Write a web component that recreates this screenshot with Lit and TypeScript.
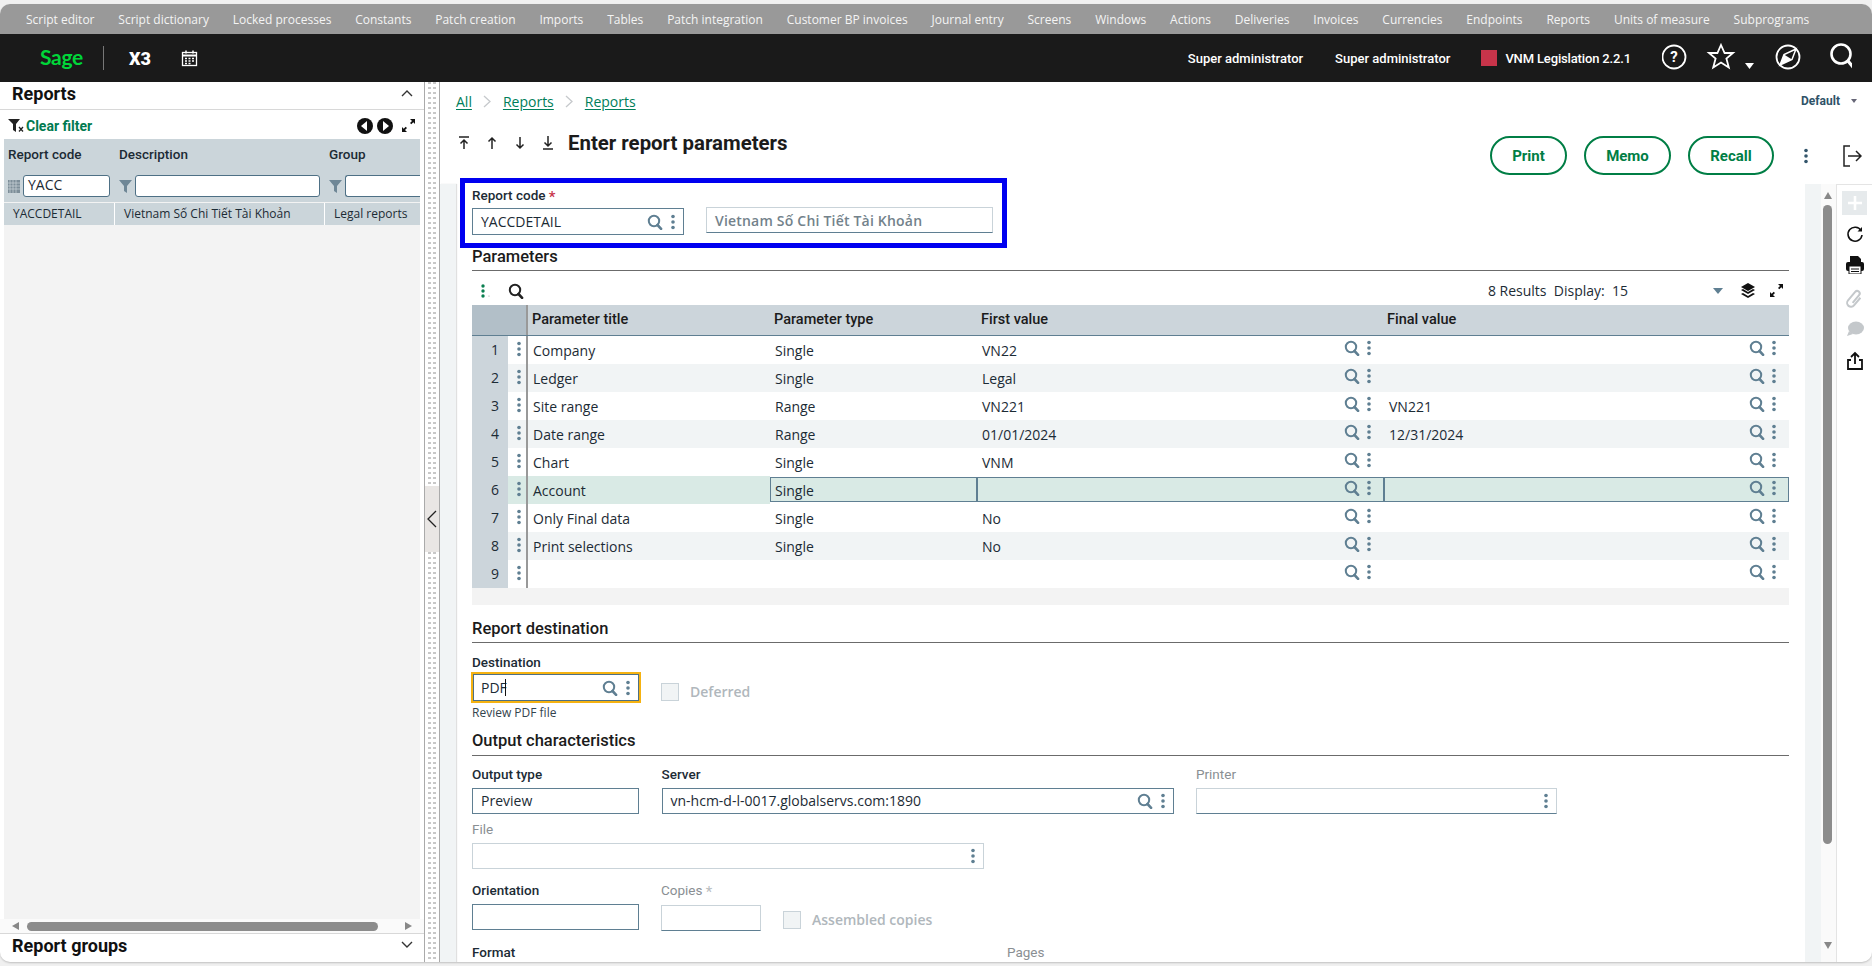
import { LitElement, html, css, svg } from "lit";
import { customElement } from "lit/decorators.js";

const search = (s = 16, c = "#5f7f92") => html`<svg class="ico" width=${s} height=${s} viewBox="0 0 16 16" fill="none" stroke=${c}><circle cx="7" cy="7" r="5.2" stroke-width="2"/><path d="M10.5 11l3.6 3.8" stroke-width="2.6" stroke-linecap="round"/></svg>`;
const dots = (c = "#5f7f92") => html`<svg class="ico" width="4" height="16" viewBox="0 0 4 16" fill=${c}><circle cx="2" cy="2.5" r="1.8"/><circle cx="2" cy="8" r="1.8"/><circle cx="2" cy="13.5" r="1.8"/></svg>`;
const funnel = (c = "#6f8796") => html`<svg class="ico" width="13" height="14" viewBox="0 0 13 14" fill=${c}><path d="M0 1h13L8 7v7L5 12V7z"/></svg>`;
const expand = () => html`<svg class="ico" width="15" height="15" viewBox="0 0 15 15" fill="#111"><path d="M9 1h5v5l-1.700-1.700-2 2-1.300-1.300 2-2zM6 14H1V9l1.700 1.700 2-2 1.300 1.300-2 2z"/></svg>`;
const crumbSep = () => html`<i><svg class="ico" width="8" height="13" viewBox="0 0 8 13" fill="none" stroke="#c6c9cc" stroke-width="1.300"><path d="M1 1l6 5.500L1 12"/></svg></i>`;
const arrow = (dir: string) => {
  const body = {
    first: svg`<path d="M3 2h10M8 14V5M4.500 8.500L8 5l3.500 3.500"/>`,
    up: svg`<path d="M8 14V3M4.500 6.500L8 3l3.500 3.500"/>`,
    down: svg`<path d="M8 2v11M4.500 9.500L8 13l3.500-3.500"/>`,
    last: svg`<path d="M8 1v10M4.500 7.500L8 11l3.500-3.500M3 14h10"/>`,
  }[dir];
  return html`<svg class="ico" width="16" height="16" viewBox="0 0 16 16" fill="none" stroke="#222" stroke-width="1.500">${body}</svg>`;
};

const NAV = ["Script editor","Script dictionary","Locked processes","Constants","Patch creation","Imports","Tables","Patch integration","Customer BP invoices","Journal entry","Screens","Windows","Actions","Deliveries","Invoices","Currencies","Endpoints","Reports","Units of measure","Subprograms"];

const ROWS: [string,string,string,string][] = [
  ["Company","Single","VN22",""],
  ["Ledger","Single","Legal",""],
  ["Site range","Range","VN221","VN221"],
  ["Date range","Range","01/01/2024","12/31/2024"],
  ["Chart","Single","VNM",""],
  ["Account","Single","",""],
  ["Only Final data","Single","No",""],
  ["Print selections","Single","No",""],
  ["","","",""],
];

@customElement("app-root")
export class AppRoot extends LitElement {
  static styles = css`
    :host { display:block; width:1872px; height:966px; background:#f0f0f0; padding-top:4px; box-sizing:border-box; overflow:hidden;
      font-family:"Open Sans","Liberation Sans",sans-serif; font-size:14px; color:#1c2b35; }
    * { box-sizing:border-box; }
    .ico { display:block; flex:none; }
    .app { height:958px; background:#fff; border-radius:10px; overflow:hidden; display:flex; flex-direction:column; box-shadow:0 1px 2px rgba(0,0,0,.2); }

    .nav { height:30px; flex:none; background:#999; color:#f4f4f4; display:flex; align-items:center; padding-left:26px; gap:23.850px; font-size:12px; white-space:nowrap; }
    .top { height:48px; flex:none; background:#1a1a1a; color:#fff; display:flex; align-items:center; }
    .logo { width:104px; padding-left:40px; color:#00d639; font-family:Lato,sans-serif; font-weight:700; font-size:21px; letter-spacing:-.3px; border-right:1px solid #777; height:24px; line-height:22px; flex:none; }
    .x3 { font-family:Roboto,sans-serif; font-weight:900; font-size:18px; margin-left:25px; width:52px; flex:none; }
    .spacer { flex:1; }
    .user { font-family:Roboto,sans-serif; font-weight:500; font-size:13px; }
    .u1 { margin-right:32px; }
    .u2 { margin-right:31px; }
    .sq { width:16px; height:16px; background:#c8344a; margin-right:8px; }
    .leg { margin-right:31px; letter-spacing:-.15px; }
    .topicons { display:flex; align-items:center; padding-right:20px; }

    .body { flex:1; display:flex; min-height:0; }
    .left { width:424px; flex:none; display:flex; flex-direction:column; }
    .ptitle { font-family:Roboto,sans-serif; font-weight:700; font-size:18px; display:flex; justify-content:space-between; align-items:center; padding:0 10px 0 12px; color:#111; }
    .ptitle.t { height:28px; border-bottom:1px solid #d8d8d8; padding-bottom:5px; }
    .ptitle.b { height:29px; border-top:1px solid #d8d8d8; padding-bottom:6px; }
    .clear { height:29px; display:flex; align-items:center; padding:2px 8px 0 8px; }
    .clear b { font-family:Roboto,sans-serif; font-size:14px; font-weight:700; color:#007a50; flex:1; }
    .circ { display:flex; gap:4px; margin-right:8px; }
    .ltable { flex:1; margin:0 4px; background:#f3f3f3; overflow:hidden; font-size:12px; }
    .lrow { display:grid; grid-template-columns:111px 210px 95px; background:#cbd5da; }
    .lh { height:30px; font-family:Roboto,sans-serif; font-weight:500; font-size:13.500px; align-items:center; }
    .lh span { padding-left:4px; }
    .lf { height:33px; align-items:start; padding-top:6px; }
    .lf div { display:flex; align-items:center; gap:3px; padding-left:4px; }
    .lf .inp { height:22px; background:#fff; border:1px solid #4e7085; border-radius:3px; padding-left:4px; font-size:14px; flex:1; min-width:0; line-height:18px; }
    .lf div:first-child .inp { margin-right:5px; }
    .lf div:nth-child(2) .inp { margin-right:5px; }
    .lf div:last-child .inp { border-right:0; border-radius:3px 0 0 3px; }
    .ld { height:23px; border-top:1px solid #f3f3f3; align-items:center; line-height:22px; }
    .ld span { padding-left:9px; height:100%; border-right:1px solid #fff; white-space:nowrap; }
    .ld span:last-child { border:0; }
    .hbar { height:14px; background:#fafafa; flex:none; display:flex; align-items:center; padding:0 12px; gap:8px; }
    .thumb { width:351px; height:9px; background:#8c8c8c; border-radius:5px; }
    .tl { width:0; height:0; border:4.500px solid transparent; border-left:0; border-right:7px solid #888; }
    .tr { width:0; height:0; border:4.500px solid transparent; border-right:0; border-left:7px solid #888; margin-left:19px; }

    .split { width:16px; flex:none; border-left:1px solid #aaa; border-right:1px solid #aaa; position:relative; display:flex; justify-content:center; gap:2px; }
    .dotc { width:3px; height:100%; background:repeating-linear-gradient(to bottom,#c8c8c8 0 2.500px,transparent 2.500px 5px); }
    .handle { position:absolute; left:0; right:0; top:404px; height:66px; background:#e9e6e4; display:flex; align-items:center; justify-content:center; }

    .main { flex:1; min-width:0; display:flex; flex-direction:column; }
    .head { height:102px; flex:none; padding:0 10px 0 16px; display:grid; grid-template-columns:1fr auto; grid-template-rows:39px 1fr; }
    .crumb { display:flex; align-items:center; font-size:14px; padding-bottom:1px; }
    .crumb a { color:#007e5a; text-decoration:underline; text-underline-offset:2px; }
    .crumb i { width:31px; display:flex; justify-content:center; }
    .def { justify-self:end; display:flex; align-items:center; gap:11px; font-family:Roboto,sans-serif; font-weight:700; font-size:12px; color:#2f5268; padding:0 5px 2px 0; }
    .def::after { content:""; border:3px solid transparent; border-top:4px solid #667; border-bottom:0; }
    .titleline { display:flex; align-items:flex-start; padding-top:12px; }
    .titleline .ico { margin-right:12px; margin-top:2px; }
    .titleline h1 { margin:-2px 0 0 0; font-family:Roboto,sans-serif; font-weight:700; font-size:20.400px; color:#1b1b1b; }
    .acts { display:flex; align-items:center; padding-top:15px; height:54px; }
    .btn { height:39px; border:2px solid #007e45; border-radius:20px; display:flex; align-items:center; justify-content:center; font-family:Roboto,sans-serif; font-weight:700; font-size:15px; color:#007e45; margin-right:17px; }
    .acts .d { margin:0 34px 0 30px; }

    .wrap { flex:1; min-height:0; display:flex; }
    .strip { width:16px; flex:none; background:#f1f4f5; }
    .strip.l { box-shadow:1px 0 1px rgba(0,0,0,.12); }
    .form { flex:1; min-width:0; padding:0 16px; }
    .vbar { width:15px; flex:none; background:#fafafa; display:flex; flex-direction:column; align-items:center; padding:8px 2px 6px 0; }
    .vbar .thumbv { width:9px; height:639px; margin:6px 0 98px; background:#8c8c8c; border-radius:5px; flex:none; }
    .vu { width:0; height:0; border:4.500px solid transparent; border-top:0; border-bottom:7px solid #888; flex:none; }
    .vd { width:0; height:0; border:4.500px solid transparent; border-bottom:0; border-top:7px solid #888; flex:none; }
    .tools { width:36px; flex:none; border-top:1px solid #e4e4e4; border-left:1px solid #e4e4e4; display:flex; flex-direction:column; align-items:center; padding-top:6px; }
    .plus { width:25px; height:24px; background:#e6eaec; display:flex; align-items:center; justify-content:center; margin-bottom:10px; }
    .tools > svg { margin-bottom:13px; }

    .blue { margin:-6px 0 0 -12px; width:547px; height:70px; border:5px solid #0000f0; padding:4px 7px 0; position:relative; background:#fff; }
    .lbl { font-family:Roboto,sans-serif; font-weight:500; font-size:13.500px; line-height:16px; margin-bottom:6px; color:#1c2b35; white-space:nowrap; }
    .lbl.g { color:#8a8f93; font-weight:400; }
    .lbl.tight { margin-bottom:2px; }
    .star { color:#c8344a; font-size:15px; line-height:14px; vertical-align:-2px; }
    .lbl.g .star { color:#b9bdc0; }
    .bf { display:flex; gap:22px; }
    .bf .lbl { margin-bottom:4px; }
    .inp2 { height:26px; border:1px solid #5f7f92; display:flex; align-items:center; padding:0 8px; gap:8px; font-size:14px; }
    .inp2 .tx { flex:1; white-space:nowrap; padding-bottom:2px; }
    .blue .inp2 .tx { padding-bottom:0; }
    .inp2.dis { border-color:#c9d3d9; border-bottom-color:#5f7f92; }
    .inp2.dis2 { border-color:#c9d3d9; }
    .dt { font-weight:600; color:#73828b; letter-spacing:.2px; }
    .sec { font-family:Roboto,sans-serif; font-weight:500; font-size:16.500px; line-height:20px; border-bottom:1px solid #6b6b6b; color:#1b1b1b; padding-bottom:4px; }
    .sec.p { height:23px; line-height:18px; }
    .sec.d { margin-top:15px; height:23px; line-height:18px; }
    .sec.o { height:34px; padding-top:10px; line-height:18px; }
    .gbar { height:34px; display:flex; align-items:center; font-size:14px; padding:5px 5px 0 9px; }
    .gbar .sr { margin-left:17px; flex:1; }
    .ghead, .grow { display:grid; grid-template-columns:36px 18px 2px 242px 207px 407px 405px; }
    .ghead { height:31px; background:#ccd5db; border-bottom:1px solid #5f7f92; font-family:Roboto,sans-serif; font-weight:500; font-size:14.500px; align-items:center; color:#1b1b1b; }
    .gcorner { grid-column:1 / 3; background:#b2bfc8; height:30px; }
    .gdiv { background:#999; height:100%; }
    .ghead span { padding:0 0 1px 4px; }
    .ghead .gcorner, .ghead .gdiv { padding:0; }
    .ghead span:last-child { padding-left:3px; }
    .grow { height:28px; }
    .num { background:#ccd5db; display:flex; align-items:center; justify-content:flex-end; padding:0 9px 2px 0; }
    .dc { display:flex; align-items:center; justify-content:center; padding:0 0 3px 4px; }
    .cell { display:flex; align-items:center; padding-left:5px; min-width:0; white-space:nowrap; }
    .cell .tx { flex:1; padding-top:1px; }
    .cell .i { display:flex; align-items:center; gap:7px; padding:0 13px 4px 0; }
    .even .cell { background:#f1f4f5; }
    .even .dc { background:#f1f4f5; }
    .sel .cell, .sel .dc { background:#d9eae5; }
    .sel .box { box-shadow:inset 0 0 0 1px #5f7f92; margin-bottom:2px; margin-top:1px; }
    .gfoot { height:17px; background:#f3f3f3; }
    .pdf { width:170px; height:31px; margin-left:-1px; border:2px solid #f5b211; box-shadow:inset 0 0 0 1px #4e7085; display:flex; align-items:center; gap:8px; padding:0 9px 0 8px; }
    .pdf .tx { flex:1; }
    .pdf u { display:inline-block; width:1px; height:17px; background:#111; vertical-align:-3px; margin-left:-2px; text-decoration:none; }
    .cb { width:18px; height:18px; background:#f1f4f5; border:1px solid #c9d3d9; flex:none; }
    .chk { display:flex; align-items:center; gap:11px; font-weight:600; color:#b0b7bc; }
    .destrow { display:flex; }
    .review { font-size:12px; line-height:19px; color:#33434d; }
    .r1 { display:grid; grid-template-columns:167px 512px 361px; column-gap:22.500px; margin-top:10px; }
    .r2 { margin-top:7px; width:512px; }
    .r3 { display:grid; grid-template-columns:167px 100px 1fr; column-gap:22px; margin-top:13px; }
    .r4 { display:flex; margin-top:13px; width:1000px; }
    .r4 .lbl { margin:0; }
  `;

  render() {
    return html`<div class="app">
      <div class="nav">${NAV.map((n) => html`<span>${n}</span>`)}</div>
      <div class="top">
        <div class="logo">Sage</div>
        <div class="x3">X3</div>
        <svg class="ico" width="17" height="17" viewBox="0 0 17 17" fill="none" stroke="#fff"><rect x="1.500" y="2.500" width="14" height="13" stroke-width="1.300"/><path d="M1.500 5.500h14" stroke-width="2"/><path d="M5 .5v3M12 .5v3" stroke-width="1.500"/><path d="M4 8.500h2M7.500 8.500h2M11 8.500h2M4 11h2M7.500 11h2M11 11h2M4 13.500h2M7.500 13.500h2" stroke-width="1.300"/></svg>
        <div class="spacer"></div>
        <span class="user u1">Super administrator</span>
        <span class="user u2">Super administrator</span>
        <span class="sq"></span>
        <span class="user leg">VNM Legislation 2.2.1</span>
        <div class="topicons">
          <svg class="ico" width="190" height="32" viewBox="0 0 190 32" fill="none" stroke="#fff">
            <circle cx="12" cy="15" r="11.500" stroke-width="1.800"/>
            <text x="12" y="20" text-anchor="middle" fill="#fff" stroke="none" font-family="Roboto" font-weight="700" font-size="15">?</text>
            <path d="M59 3l3.600 8h8.400l-6.600 5.600 2.400 9-7.800-5-7.800 5 2.400-9L47 11h8.400z" stroke-width="1.800" stroke-linejoin="miter"/>
            <path d="M83 21h9l-4.500 6z" fill="#fff" stroke="none"/>
            <circle cx="126" cy="15" r="11.500" stroke-width="1.800"/>
            <path d="M134 7l-12 5.500-4 10.500 12-5.500z" stroke-width="1.500"/>
            <path d="M122 12.500l8 5-12 5.500z" fill="#fff" stroke="none"/>
            <circle cx="179" cy="12" r="9.500" stroke-width="2.600"/>
            <path d="M186 19l5 6" stroke-width="3.200" stroke-linecap="round"/>
          </svg>
        </div>
      </div>
      <div class="body">
        <div class="left">
          <div class="ptitle t"><span>Reports</span><svg class="ico" width="14" height="8" viewBox="0 0 14 8" fill="none" stroke="#333" stroke-width="1.400"><path d="M2 7l5-5 5 5"/></svg></div>
          <div class="clear">
            <svg class="ico" width="18" height="15" viewBox="0 0 18 15"><path d="M0 1h12L8 6v8L5 12V6z" fill="#222"/><path d="M11 9l4 4.500M15 9l-4 4.500" stroke="#222" stroke-width="1.300"/></svg>
            <b>Clear filter</b>
            <div class="circ">
              <svg class="ico" width="16" height="16" viewBox="0 0 16 16"><circle cx="8" cy="8" r="8" fill="#111"/><path d="M10 3v10L4 8z" fill="#fff"/></svg>
              <svg class="ico" width="16" height="16" viewBox="0 0 16 16"><circle cx="8" cy="8" r="8" fill="#111"/><path d="M6 3v10l6-5z" fill="#fff"/></svg>
            </div>
            ${expand()}
          </div>
          <div class="ltable">
            <div class="lrow lh"><span>Report code</span><span>Description</span><span>Group</span></div>
            <div class="lrow lf">
              <div><svg class="ico" width="12" height="13" viewBox="0 0 12 13"><rect width="12" height="13" fill="#7d8e99"/><path d="M2 0v13M5 0v13M8 0v13M0 3h12M0 6h12M0 9h12" stroke="#cbd5da" stroke-width=".7"/></svg><span class="inp">YACC</span></div>
              <div>${funnel()}<span class="inp"></span></div>
              <div>${funnel()}<span class="inp"></span></div>
            </div>
            <div class="lrow ld"><span>YACCDETAIL</span><span>Vietnam Số Chi Tiết Tài Khoản</span><span>Legal reports</span></div>
          </div>
          <div class="hbar"><span class="tl"></span><span class="thumb"></span><span class="tr"></span></div>
          <div class="ptitle b"><span>Report groups</span><svg class="ico" width="14" height="8" viewBox="0 0 14 8" fill="none" stroke="#333" stroke-width="1.400"><path d="M2 1l5 5 5-5"/></svg></div>
        </div>
        <div class="split"><span class="dotc"></span><span class="dotc"></span>
          <div class="handle"><svg class="ico" width="10" height="18" viewBox="0 0 10 18" fill="none" stroke="#222" stroke-width="1.300"><path d="M9 1L1 9l8 8"/></svg></div>
        </div>
        <div class="main">
          <div class="head">
            <div class="crumb"><a>All</a>${crumbSep()}<a>Reports</a>${crumbSep()}<a>Reports</a></div>
            <div class="def">Default</div>
            <div class="titleline">${arrow("first")}${arrow("up")}${arrow("down")}${arrow("last")}<h1>Enter report parameters</h1></div>
            <div class="acts">
              <div class="btn" style="width:77px">Print</div>
              <div class="btn" style="width:87px">Memo</div>
              <div class="btn" style="width:86px;margin-right:0">Recall</div>
              <span class="d">${dots("#34566c")}</span>
              <svg class="ico" width="20" height="22" viewBox="0 0 20 22" fill="none" stroke="#222" stroke-width="1.500"><path d="M8 1H2v20h6M6 11h13M14 6l5 5-5 5"/></svg>
            </div>
          </div>
          <div class="wrap">
            <div class="strip l"></div>
            <div class="form">
              <div class="blue">
                <div class="bf">
                  <div style="width:212px"><div class="lbl">Report code <span class="star">*</span></div>
                    <div class="inp2" style="height:27px"><span class="tx">YACCDETAIL</span>${search()}${dots()}</div></div>
                  <div style="width:287px;padding-top:20px"><div class="inp2 dis"><span class="tx dt">Vietnam Số Chi Tiết Tài Khoản</span></div></div>
                </div>
              </div>
              <div class="sec p">Parameters</div>
              <div class="gbar">
                <svg class="ico" width="10" height="14" viewBox="0 0 10 14" fill="#0a7f50"><circle cx="2" cy="2" r="1.700"/><circle cx="2" cy="7" r="1.700"/><circle cx="2" cy="12" r="1.700"/><circle cx="8" cy="12" r=".6" fill="#999"/></svg>
                <span class="sr">${search(16, "#222")}</span>
                <span style="margin-right:85px;white-space:pre">8 Results  Display:  15</span>
                <svg class="ico" width="10" height="6" viewBox="0 0 10 6" fill="#5f7f92" style="margin-right:17px"><path d="M0 0h10L5 6z"/></svg>
                <svg class="ico" width="16" height="16" viewBox="0 0 16 16" fill="#111" style="margin-right:13px"><path d="M8 0l7 4-7 4-7-4zM1 7l2-1 5 3 5-3 2 1-7 4zM1 11l2-1 5 3 5-3 2 1-7 4z"/></svg>
                ${expand()}
              </div>
              <div class="ghead"><span class="gcorner"></span><span class="gdiv"></span><span>Parameter title</span><span>Parameter type</span><span>First value</span><span>Final value</span></div>
              ${ROWS.map((r, i) => html`<div class="grow ${i % 2 === 1 ? "even" : ""} ${i === 5 ? "sel" : ""}">
                <div class="num">${i + 1}</div><div class="dc">${dots()}</div><div class="gdiv"></div>
                <div class="cell"><span class="tx">${r[0]}</span></div>
                <div class="cell box"><span class="tx">${r[1]}</span></div>
                <div class="cell box"><span class="tx">${r[2]}</span><span class="i">${search()}${dots()}</span></div>
                <div class="cell box"><span class="tx">${r[3]}</span><span class="i">${search()}${dots()}</span></div>
              </div>`)}
              <div class="gfoot"></div>
              <div class="sec d">Report destination</div>
              <div style="padding-top:11px">
                <div class="lbl tight">Destination</div>
                <div class="destrow">
                  <div class="pdf"><span class="tx">PDF<u></u></span>${search()}${dots()}</div>
                  <div class="chk" style="margin-left:20px;padding-top:8px"><span class="cb"></span>Deferred</div>
                </div>
                <div class="review">Review PDF file</div>
              </div>
              <div class="sec o">Output characteristics</div>
              <div class="r1">
                <div><div class="lbl">Output type</div><div class="inp2"><span class="tx">Preview</span></div></div>
                <div><div class="lbl">Server</div><div class="inp2"><span class="tx">vn-hcm-d-l-0017.globalservs.com:1890</span>${search()}${dots()}</div></div>
                <div><div class="lbl g">Printer</div><div class="inp2 dis"><span class="tx"></span>${dots()}</div></div>
              </div>
              <div class="r2"><div class="lbl g">File</div><div class="inp2 dis2"><span class="tx"></span>${dots()}</div></div>
              <div class="r3">
                <div><div class="lbl">Orientation</div><div class="inp2"></div></div>
                <div><div class="lbl g">Copies <span class="star">*</span></div><div class="inp2 dis"></div></div>
                <div class="chk" style="padding-top:26px"><span class="cb"></span>Assembled copies</div>
              </div>
              <div class="r4"><div class="lbl" style="width:535px">Format</div><div class="lbl g">Pages</div></div>
            </div>
            <div class="strip"></div>
            <div class="vbar"><span class="vu"></span><span class="thumbv"></span><span class="vd"></span></div>
            <div class="tools">
              <div class="plus"><svg class="ico" width="16" height="16" viewBox="0 0 16 16" stroke="#fff" stroke-width="2.600"><path d="M8 1v14M1 8h14"/></svg></div>
              <svg class="ico" width="18" height="18" viewBox="0 0 18 18" fill="none" stroke="#111" stroke-width="1.600"><path d="M15 5.500A7 7 0 1 0 16 10"/><path d="M16 2v4.500h-4.500z" fill="#111" stroke="none"/></svg>
              <svg class="ico" width="18" height="18" viewBox="0 0 18 18"><path d="M4 0h8l3 3v4H4z" fill="#111"/><rect x="0" y="6" width="18" height="9" rx="2" fill="#111"/><rect x="3" y="10" width="12" height="8" fill="#fff" stroke="#111"/><path d="M5 13h8M5 15.500h8" stroke="#111"/></svg>
              <svg class="ico" width="20" height="24" viewBox="0 0 18 20" fill="none" stroke="#c4c8cb" stroke-width="1.800" style="transform:rotate(40deg);margin-bottom:9px"><path d="M12 6v9a3.500 3.500 0 0 1-7 0V5a2.300 2.300 0 0 1 4.600 0v9"/></svg>
              <svg class="ico" width="18" height="18" viewBox="0 0 18 18" fill="#c4c8cb"><ellipse cx="10" cy="8" rx="8" ry="6.500"/><path d="M3 11l-2 5 6-2z"/></svg>
              <svg class="ico" width="18" height="20" viewBox="0 0 18 20" fill="none" stroke="#111" stroke-width="1.800"><path d="M9 13V2M5 6l4-4 4 4M5 9H2v9h14V9h-3"/></svg>
            </div>
          </div>
        </div>
      </div>
    </div>`;
  }
}
